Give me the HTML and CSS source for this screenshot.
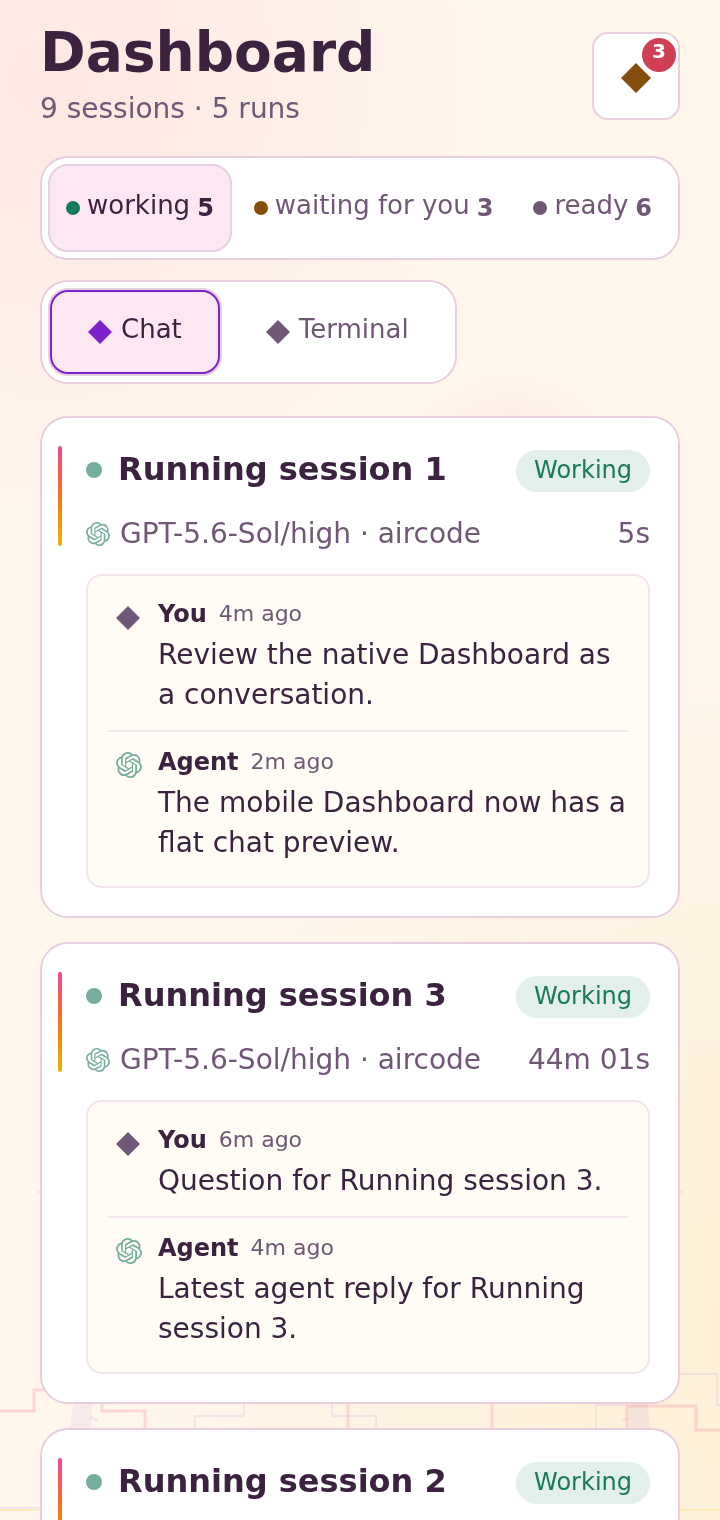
FILE: index.html
```html
<!DOCTYPE html>
<html lang="en">
  <head>
    <meta charset="UTF-8" />
    <meta name="viewport" content="width=device-width, initial-scale=1.0" />
    <title>Dashboard</title>
    <link rel="stylesheet" href="styles.css">
  </head>
  <body>
    <!-- Shared icons -->
    <svg class="sprite" aria-hidden="true">
      <symbol id="diamond" viewBox="0 0 24 24">
        <path d="M12 0L24 12L12 24L0 12Z" />
      </symbol>
      <symbol id="openai" viewBox="0 0 24 24">
        <path d="M22.2819 9.8211a5.9847 5.9847 0 0 0-.5157-4.9108 6.0462 6.0462 0 0 0-6.5098-2.9A6.0651 6.0651 0 0 0 4.9807 4.1818a5.9847 5.9847 0 0 0-3.9977 2.9 6.0462 6.0462 0 0 0 .7427 7.0966 5.98 5.98 0 0 0 .511 4.9107 6.051 6.051 0 0 0 6.5146 2.9001A5.9847 5.9847 0 0 0 13.2599 24a6.0557 6.0557 0 0 0 5.7718-4.2058 5.9894 5.9894 0 0 0 3.9977-2.9001 6.0557 6.0557 0 0 0-.7475-7.0729zm-9.022 12.6081a4.4755 4.4755 0 0 1-2.8764-1.0408l.1419-.0804 4.7783-2.7582a.7948.7948 0 0 0 .3927-.6813v-6.7369l2.02 1.1686a.071.071 0 0 1 .038.052v5.5826a4.504 4.504 0 0 1-4.4945 4.4944zm-9.6607-4.1254a4.4708 4.4708 0 0 1-.5346-3.0137l.142.0852 4.783 2.7582a.7712.7712 0 0 0 .7806 0l5.8428-3.3685v2.3324a.0804.0804 0 0 1-.0332.0615L9.74 19.9502a4.4992 4.4992 0 0 1-6.1408-1.6464zM2.3408 7.8956a4.485 4.485 0 0 1 2.3655-1.9728V11.6a.7664.7664 0 0 0 .3879.6765l5.8144 3.3543-2.0201 1.1685a.0757.0757 0 0 1-.071 0l-4.8303-2.7865A4.504 4.504 0 0 1 2.3408 7.872zm16.5963 3.8558L13.1038 8.364 15.1192 7.2a.0757.0757 0 0 1 .071 0l4.8303 2.7913a4.4944 4.4944 0 0 1-.6765 8.1042v-5.6772a.79.79 0 0 0-.407-.667zm2.0107-3.0231l-.142-.0852-4.7735-2.7818a.7759.7759 0 0 0-.7854 0L9.409 9.2297V6.8974a.0662.0662 0 0 1 .0284-.0615l4.8303-2.7866a4.4992 4.4992 0 0 1 6.6802 4.66zM8.3065 12.863l-2.02-1.1638a.0804.0804 0 0 1-.038-.0567V6.0742a4.4992 4.4992 0 0 1 7.3757-3.4537l-.142.0805L8.704 5.459a.7948.7948 0 0 0-.3927.6813zm1.0976-2.3654l2.602-1.4998 2.6069 1.4998v2.9994l-2.5974 1.4997-2.6067-1.4997Z" />
      </symbol>
    </svg>

    <!-- Skyline backdrop -->
    <svg class="backdrop" viewBox="0 0 720 1520" preserveAspectRatio="xMidYMax slice" aria-hidden="true">
      <g class="line-lilac">
        <path d="M195 1430V1416H244V1400" />
        <path d="M332 1400V1416H376V1430" />
        <path d="M596 1430V1405H627" />
        <path d="M676 1374H717V1405H720" />
        <path d="M0 1508H44" />
        <path d="M90 1417L98 1421M622 1421L628 1418" />
      </g>
      <g class="towers">
        <path d="M74 1398H93L90 1434H69Z" />
        <path d="M629 1398H647L651 1434H629Z" />
        <circle cx="39" cy="1192" r="2" />
        <circle cx="681" cy="1192" r="2" />
      </g>
      <g class="line-pink">
        <path d="M0 1411H34V1390H50" />
        <path d="M102 1400V1411H145V1434" />
        <path d="M348 1400V1434M492 1400V1434" />
        <path d="M627 1434V1406H696V1430H720" />
      </g>
      <path class="line-gold" d="M0 1510H44M676 1510H720" />
    </svg>

    <main class="app">
      <header class="header">
        <div class="heading">
          <h1>Dashboard</h1>
          <p>9 sessions · 5 runs</p>
        </div>
        <button class="alerts" type="button" aria-label="Alerts">
          <svg class="icon-alert"><use href="#diamond" /></svg>
          <span class="badge">3</span>
        </button>
      </header>

      <nav class="filters" aria-label="Session status">
        <button class="filter active" type="button">
          <span class="dot green"></span>
          <span class="label">working</span>
          <b>5</b>
        </button>
        <button class="filter" type="button">
          <span class="dot brown"></span>
          <span class="label">waiting for you</span>
          <b>3</b>
        </button>
        <button class="filter" type="button">
          <span class="dot"></span>
          <span class="label">ready</span>
          <b>6</b>
        </button>
      </nav>

      <nav class="filters views" aria-label="View">
        <button class="filter view active focused" type="button">
          <svg class="icon-view"><use href="#diamond" /></svg>
          <span class="label">Chat</span>
        </button>
        <button class="filter view" type="button">
          <svg class="icon-view"><use href="#diamond" /></svg>
          <span class="label">Terminal</span>
        </button>
      </nav>

      <section class="sessions">
        <article class="card">
          <div class="accent"></div>
          <div class="content">
            <div class="title-row">
              <span class="status-dot"></span>
              <h2>Running session 1</h2>
              <span class="pill">Working</span>
            </div>
            <div class="meta">
              <svg class="icon-model"><use href="#openai" /></svg>
              <span class="model">GPT-5.6-Sol/high · aircode</span>
              <span>5s</span>
            </div>
            <div class="preview">
              <div class="message">
                <svg class="icon-user"><use href="#diamond" /></svg>
                <div>
                  <div class="from"><b>You</b><time>4m ago</time></div>
                  <p>Review the native Dashboard as a conversation.</p>
                </div>
              </div>
              <div class="message">
                <svg class="icon-agent"><use href="#openai" /></svg>
                <div>
                  <div class="from"><b>Agent</b><time>2m ago</time></div>
                  <p>The mobile Dashboard now has a flat chat preview.</p>
                </div>
              </div>
            </div>
          </div>
        </article>

        <article class="card">
          <div class="accent"></div>
          <div class="content">
            <div class="title-row">
              <span class="status-dot"></span>
              <h2>Running session 3</h2>
              <span class="pill">Working</span>
            </div>
            <div class="meta">
              <svg class="icon-model"><use href="#openai" /></svg>
              <span class="model">GPT-5.6-Sol/high · aircode</span>
              <span>44m 01s</span>
            </div>
            <div class="preview">
              <div class="message">
                <svg class="icon-user"><use href="#diamond" /></svg>
                <div>
                  <div class="from"><b>You</b><time>6m ago</time></div>
                  <p>Question for Running session 3.</p>
                </div>
              </div>
              <div class="message">
                <svg class="icon-agent"><use href="#openai" /></svg>
                <div>
                  <div class="from"><b>Agent</b><time>4m ago</time></div>
                  <p>Latest agent reply for Running session 3.</p>
                </div>
              </div>
            </div>
          </div>
        </article>

        <article class="card">
          <div class="accent"></div>
          <div class="content">
            <div class="title-row">
              <span class="status-dot"></span>
              <h2>Running session 2</h2>
              <span class="pill">Working</span>
            </div>
          </div>
        </article>
      </section>
    </main>
  </body>
</html>
```
FILE: styles.css
```css
:root {
  --ink: #3b2340;
  --muted: #705775;
  --border: #e8cfe0;
  --soft-border: #f3e5ee;
  --pink: #fce7f3;
  --green: #19795d;
  --brown: #854d0e;
  --violet: #7e22ce;
}

* {
  box-sizing: border-box;
}

body {
  margin: 0;
  height: 100vh;
  overflow: hidden;
  font-family: "DejaVu Sans", sans-serif;
  color: var(--ink);
  background:
    radial-gradient(circle at 510px 490px, rgba(244, 63, 94, 0.1), transparent 120px),
    radial-gradient(circle at 50px 80px, rgba(244, 63, 120, 0.08), transparent 440px),
    radial-gradient(circle at 110% 88%, rgba(234, 179, 8, 0.1), transparent 680px),
    #fff6ec;
}

h1,
h2,
p {
  margin: 0;
}

button {
  font-family: inherit;
  cursor: pointer;
}

svg {
  flex: none;
  fill: currentColor;
}

.sprite {
  display: none;
}

/* Backdrop */
.backdrop {
  position: fixed;
  inset: 0;
  width: 100%;
  height: 100%;
  z-index: -1;
}

.backdrop path {
  stroke-width: 2;
}

.line-lilac,
.line-pink,
.line-gold {
  fill: none;
}

.line-lilac {
  stroke: rgba(200, 120, 225, 0.15);
}

.backdrop .line-pink path {
  stroke: rgba(244, 63, 114, 0.17);
  stroke-width: 3;
}

.line-gold {
  stroke: rgba(250, 204, 21, 0.2);
}

.towers {
  fill: rgba(192, 132, 222, 0.11);
}

.app {
  padding: 24px 40px;
}

/* Header */
.header {
  display: flex;
  align-items: center;
  justify-content: space-between;
  margin-bottom: 28px;
}

h1 {
  font-size: 55px;
  line-height: 56px;
}

.heading p {
  margin-top: 10px;
  font-size: 28px;
  line-height: 38px;
  color: var(--muted);
}

.alerts {
  position: relative;
  display: flex;
  align-items: center;
  justify-content: center;
  width: 88px;
  height: 88px;
  padding: 3px 0 0;
  border: 2px solid var(--border);
  border-radius: 16px;
  background: #fff;
  color: var(--brown);
}

.icon-alert {
  width: 30px;
  height: 30px;
}

.badge {
  position: absolute;
  top: 4px;
  right: 2px;
  width: 34px;
  height: 34px;
  border-radius: 50%;
  background: #d13f54;
  color: #fff;
  font-size: 20px;
  font-weight: bold;
  line-height: 26px;
}

/* Filters */
.filters {
  display: flex;
  gap: 4px;
  padding: 6px;
  border: 2px solid var(--border);
  border-radius: 28px;
  background: #fff;
}

.views {
  width: fit-content;
  margin: 20px 0 32px;
}

.filter {
  display: flex;
  align-items: center;
  gap: 7px;
  height: 88px;
  padding: 0 16px;
  border: 2px solid transparent;
  border-radius: 20px;
  background: none;
  color: var(--muted);
  font-size: 26px;
  white-space: nowrap;
}

.filter.active {
  border-color: var(--border);
  background: var(--pink);
  color: var(--ink);
}

.filter .label {
  padding-bottom: 6px;
}

.filter b {
  font-size: 24px;
}

.view {
  gap: 9px;
  padding: 0 38px;
}

.focused {
  outline: 2px solid var(--violet);
  outline-offset: -4px;
}

.focused .icon-view {
  color: var(--violet);
}

.icon-view {
  width: 24px;
  height: 24px;
}

.dot {
  width: 14px;
  height: 14px;
  border-radius: 50%;
  background: var(--muted);
}

.dot.green {
  background: var(--green);
}

.dot.brown {
  background: var(--brown);
}

/* Session cards */
.sessions {
  display: grid;
  gap: 24px;
}

.card {
  display: flex;
  gap: 24px;
  padding: 28px 28px 28px 16px;
  border: 2px solid var(--border);
  border-radius: 28px;
  background: #fff;
}

.accent {
  flex: none;
  width: 4px;
  height: 100px;
  border-radius: 2px;
  background: linear-gradient(#ec4899, #f97316 50%, #eab308);
}

.content {
  flex: 1;
  min-width: 0;
}

.title-row {
  display: flex;
  align-items: center;
  gap: 16px;
  height: 48px;
}

.status-dot {
  width: 16px;
  height: 16px;
  border-radius: 50%;
  background: #75ae9e;
}

h2 {
  flex: 1;
  padding-bottom: 2px;
  font-size: 32px;
  line-height: 46px;
}

.pill {
  margin-top: 2px;
  padding: 0 18px;
  border-radius: 21px;
  background: #e2efeb;
  color: var(--green);
  font-size: 24px;
  line-height: 42px;
}

.title-row .pill {
  padding-bottom: 2px;
  line-height: 40px;
}

.meta {
  display: flex;
  align-items: center;
  gap: 10px;
  margin-top: 22px;
  font-size: 28px;
  line-height: 36px;
  color: var(--muted);
}

.model {
  flex: 1;
}

.icon-model {
  width: 24px;
  height: 24px;
  color: #75ae9e;
}

/* Chat preview */
.preview {
  margin-top: 22px;
  padding: 8px 20px;
  border: 2px solid var(--soft-border);
  border-radius: 16px;
  background: #fffcf5;
}

.message {
  display: flex;
  gap: 16px;
  padding: 16px 0 15px 8px;
}

.message + .message {
  border-top: 2px solid var(--soft-border);
}

.icon-user {
  width: 24px;
  height: 24px;
  margin: 6px 2px 0 0;
  color: var(--muted);
}

.icon-agent {
  width: 26px;
  height: 26px;
  margin-top: 4px;
  color: #75ae9e;
}

.from {
  display: flex;
  align-items: center;
  gap: 12px;
  margin-bottom: 7px;
  font-size: 24px;
  line-height: 28px;
}

.from time {
  font-size: 22px;
  color: var(--muted);
}

.message p {
  font-size: 28px;
  line-height: 40px;
}
```
